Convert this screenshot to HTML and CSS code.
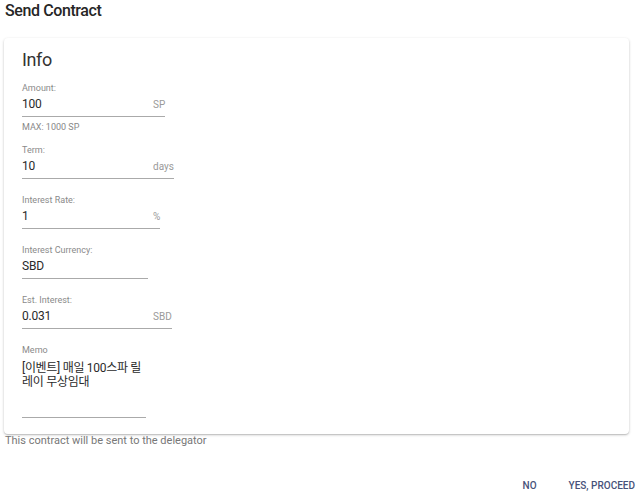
FILE: index.html
```html
<!DOCTYPE html>
<html lang="ko">
<head>
    <meta charset="UTF-8">
    <meta name="viewport" content="width=device-width, initial-scale=1.0">
    <title>Send Contract</title>
    <link rel="stylesheet" href="styles.css">
</head>
<body>

    <h2 class="dialog-title">Send Contract</h2>

    <div class="card">
        <h3 class="card-title">Info</h3>

        <div class="field with-helper">
            <label class="field-label">Amount:</label>
            <div class="field-row">
                <div class="field-input">100</div>
                <span class="field-suffix">SP</span>
            </div>
            <div class="field-helper">MAX: 1000 SP</div>
        </div>

        <div class="field">
            <label class="field-label">Term:</label>
            <div class="field-row">
                <div class="field-input">10</div>
                <span class="field-suffix">days</span>
            </div>
        </div>

        <div class="field">
            <label class="field-label">Interest Rate:</label>
            <div class="field-row">
                <div class="field-input">1</div>
                <span class="field-suffix">%</span>
            </div>
        </div>

        <div class="field">
            <label class="field-label">Interest Currency:</label>
            <div class="field-row">
                <div class="field-input">SBD</div>
            </div>
        </div>

        <div class="field">
            <label class="field-label">Est. Interest:</label>
            <div class="field-row">
                <div class="field-input">0.031</div>
                <span class="field-suffix">SBD</span>
            </div>
        </div>

        <div class="field memo">
            <label class="field-label">Memo</label>
            <div class="field-row">
                <div class="field-input memo-input">[이벤트] 매일 100스파 릴레이 무상임대</div>
            </div>
        </div>
    </div>

    <p class="note">This contract will be sent to the delegator</p>

    <div class="actions">
        <button class="btn">NO</button>
        <button class="btn">YES, PROCEED</button>
    </div>

</body>
</html>
```

FILE: styles.css
```css
/* Reset */
* {
    margin: 0;
    padding: 0;
    box-sizing: border-box;
}

body {
    font-family: Roboto, "Noto Sans CJK KR", sans-serif;
    background-color: #fff;
    color: #222;
    width: 640px;
    height: 497px;
    overflow: hidden;
}

.dialog-title {
    font-size: 16px;
    font-weight: 500;
    letter-spacing: -0.4px;
    line-height: 22px;
    color: #262626;
    padding: 0 0 0 5px;
}

/* Card */
.card {
    margin: 16px 11px 0 4px;
    height: 396px;
    background-color: #fff;
    border-radius: 4px;
    box-shadow: 0 1px 3px rgba(0, 0, 0, 0.2), 0 1px 1px rgba(0, 0, 0, 0.12);
    padding: 10px 18px 0 18px;
}

.card-title {
    font-size: 18px;
    font-weight: 400;
    letter-spacing: -0.4px;
    line-height: 24px;
    color: #333;
    margin-bottom: 10px;
}

.field {
    margin-bottom: 15px;
}

.field.with-helper {
    margin-bottom: 11px;
}

.field-label {
    display: block;
    font-size: 9px;
    line-height: 12px;
    color: #8a8a8a;
}

.field-row {
    display: flex;
    align-items: center;
    height: 23px;
}

.field-input {
    width: 126px;
    height: 23px;
    border-bottom: 1px solid #aaa;
    font-size: 12px;
    letter-spacing: -0.2px;
    line-height: 21px;
    color: #2a2a2a;
}

.field-suffix {
    font-size: 10px;
    color: #9a9a9a;
    margin-left: -126px;
    padding-left: 131px;
    height: 23px;
    line-height: 21px;
    border-bottom: 1px solid #aaa;
}

.field-helper {
    font-size: 9px;
    line-height: 12px;
    margin-top: 4px;
    color: #888;
}

.memo .field-row {
    height: 62px;
}

.memo-input {
    width: 124px;
    height: 62px;
    padding-top: 5px;
    font-size: 12px;
    letter-spacing: -0.3px;
    line-height: 14px;
    word-break: break-all;
}

.note {
    font-size: 11px;
    line-height: 14px;
    color: #777;
    padding-left: 5px;
}

.actions {
    display: flex;
    justify-content: flex-end;
    margin-top: 31px;
    padding-right: 5px;
}

.btn {
    font-family: Roboto, sans-serif;
    font-size: 10px;
    font-weight: 500;
    color: #47527a;
    background: none;
    border: none;
    padding: 0;
    line-height: 14px;
    margin-left: 32px;
    cursor: pointer;
}
```
